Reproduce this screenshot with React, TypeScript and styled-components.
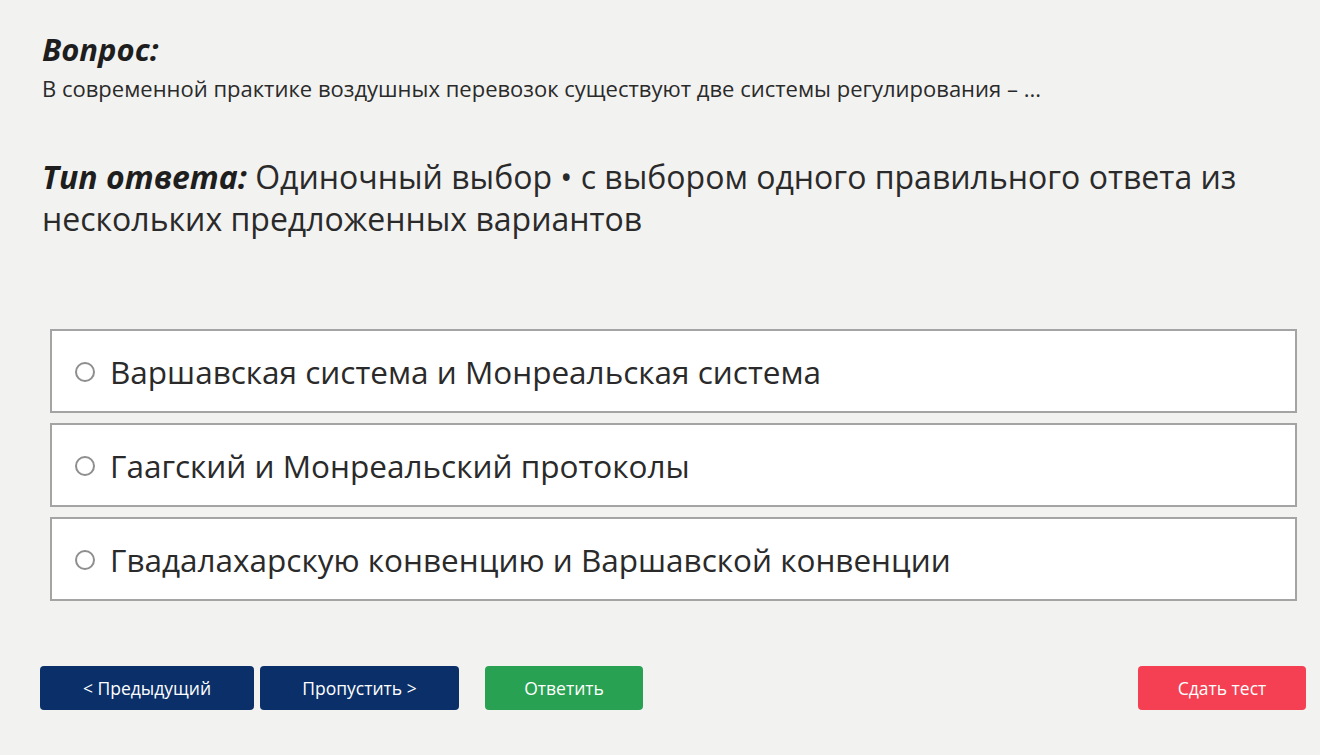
import React from "react";
import styled, { createGlobalStyle } from "styled-components";

const Global = createGlobalStyle`
  html, body { margin: 0; padding: 0; background: #f2f2f1; }
  body { font-family: "Open Sans", "Noto Sans", sans-serif; color: #222; }
  * { box-sizing: border-box; }
`;

const Page = styled.div`
  width: 1320px;
  height: 755px;
  padding: 29px 14px 0 42px;
  display: flex;
  flex-direction: column;
`;

const Heading = styled.div`
  font-size: 31px;
  font-weight: 700;
  font-style: italic;
  line-height: 40px;
  color: #1e1e1e;
`;

const QuestionText = styled.div`
  margin-top: 5px;
  font-size: 22px;
  line-height: 28px;
  color: #2a2a2a;
`;

const AnswerType = styled.div`
  margin-top: 54px;
  font-size: 32px;
  line-height: 42px;
  color: #2a2a2a;
  width: 1230px;
`;

const TypeLabel = styled.span`
  font-weight: 700;
  font-style: italic;
  color: #1e1e1e;
`;

const Options = styled.div`
  margin: 89px 9px 0 8px;
  display: flex;
  flex-direction: column;
  gap: 10px;
`;

const Option = styled.label`
  height: 84px;
  background: #fff;
  border: 2px solid #a4a4a4;
  display: flex;
  align-items: center;
  gap: 15px;
  padding: 0 0 0 23px;
  font-size: 31.5px;
  color: #2a2a2a;
  cursor: pointer;
`;

const Radio = styled.span`
  width: 20px;
  height: 20px;
  border-radius: 50%;
  border: 2px solid #8e8e8e;
  background: #fff;
  flex: none;
  margin-top: 1px;
`;

const Toolbar = styled.div`
  margin-top: 65px;
  margin-left: -2px;
  display: flex;
  align-items: center;
`;

const Button = styled.button<{ $bg: string; $w: number; $ml?: number }>`
  width: ${(p) => p.$w}px;
  height: 44px;
  margin-left: ${(p) => p.$ml ?? 0}px;
  background: ${(p) => p.$bg};
  color: #fff;
  border: none;
  border-radius: 4px;
  font-family: "Open Sans", "Noto Sans", sans-serif;
  font-size: 17.5px;
  cursor: pointer;
  padding: 0;
`;

const Spacer = styled.div`
  flex: 1;
`;

const options = [
  "Варшавская система и Монреальская система",
  "Гаагский и Монреальский протоколы",
  "Гвадалахарскую конвенцию и Варшавской конвенции",
];

export default function App() {
  return (
    <>
      <Global />
      <Page>
        <Heading>Вопрос:</Heading>
        <QuestionText>
          В современной практике воздушных перевозок существуют две системы регулирования – ...
        </QuestionText>
        <AnswerType>
          <TypeLabel>Тип ответа:</TypeLabel> Одиночный выбор • с выбором одного правильного ответа из нескольких предложенных вариантов
        </AnswerType>
        <Options>
          {options.map((o) => (
            <Option key={o}>
              <Radio />
              {o}
            </Option>
          ))}
        </Options>
        <Toolbar>
          <Button $bg="#0b3069" $w={214}>&lt; Предыдущий</Button>
          <Button $bg="#0b3069" $w={199} $ml={6}>Пропустить &gt;</Button>
          <Button $bg="#28a152" $w={158} $ml={26}>Ответить</Button>
          <Spacer />
          <Button $bg="#f53f52" $w={168}>Сдать тест</Button>
        </Toolbar>
      </Page>
    </>
  );
}
